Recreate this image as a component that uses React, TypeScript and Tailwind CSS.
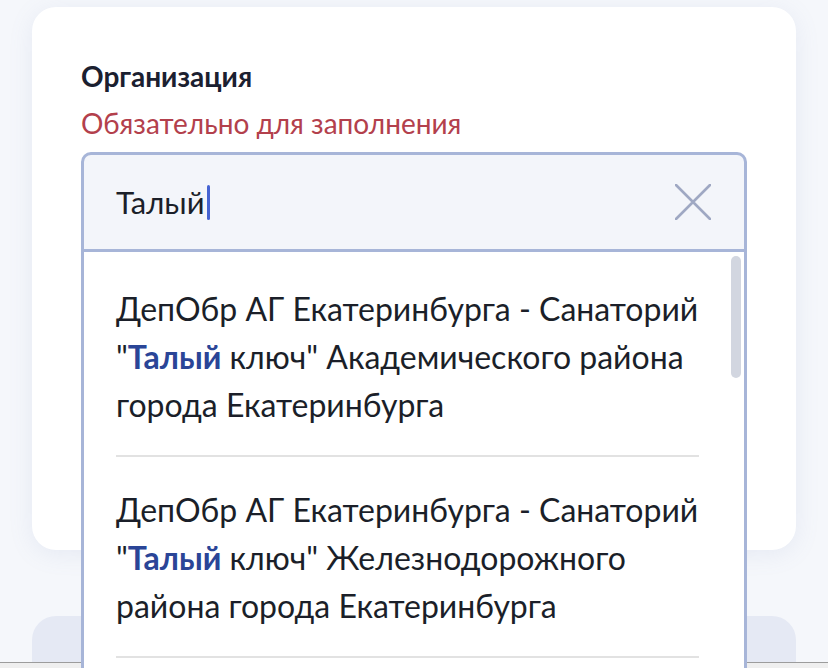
import { useState } from 'react';

const options = [
    {
        before: 'ДепОбр АГ Екатеринбурга - Санаторий "',
        match: 'Талый',
        after: ' ключ" Академического района города Екатеринбурга',
    },
    {
        before: 'ДепОбр АГ Екатеринбурга - Санаторий "',
        match: 'Талый',
        after: ' ключ" Железнодорожного района города Екатеринбурга',
    },
];

function App() {
    const [query, setQuery] = useState('Талый');

    return (
        <div
            className="relative h-[668px] overflow-hidden bg-[#f5f7fb] text-[#1b1f29]"
            style={{ fontFamily: 'Lato, "Noto Sans", sans-serif' }}
        >
            <div className="mx-[32px] mt-[7px] h-[543px] rounded-[24px] bg-white px-[49px] pt-[53px] shadow-[0_4px_24px_rgba(120,140,190,0.12)]">
                <div className="text-[28px] font-bold leading-[32px] text-[#1b2030]">Организация</div>
                <div className="mt-[15px] text-[28px] leading-[32px] text-[#b3404c]">Обязательно для заполнения</div>

                <div className="relative z-10 mt-[13px]">
                    <div className="flex h-[100px] items-center rounded-t-[10px] border-[3px] border-[#a7b5d8] bg-[#f3f5fa] pl-[32px] pr-[33px]">
                        <div className="flex flex-1 items-center">
                            <span className="text-[31px] leading-none">{query}</span>
                            <span className="ml-[2px] h-[35px] w-[3px] rounded-full bg-[#4563d2]" />
                        </div>
                        <button onClick={() => setQuery('')} className="flex h-[36px] w-[36px] items-center justify-center">
                            <svg width="36" height="36" viewBox="0 0 36 36" fill="none" stroke="#9fa8c3" strokeWidth="2.6" strokeLinecap="round">
                                <path d="M1 1L35 35M35 1L1 35" />
                            </svg>
                        </button>
                    </div>

                    <div className="absolute left-0 right-0 top-full h-[420px] border-x-[3px] border-[#a7b5d8] bg-white">
                        <div className="absolute right-[3px] top-[4px] h-[122px] w-[10px] rounded-full bg-[#d2d6e0]" />
                        <div className="pl-[32px] pr-[45px] pt-[4px]">
                            {options.map((o, i) => (
                                <div key={i} className="border-b-2 border-[#e2e2e2] pb-[26px] pt-[29px] text-[32px] leading-[48px]">
                                    {o.before}
                                    <span className="font-bold text-[#2a4597]">{o.match}</span>
                                    {o.after}
                                </div>
                            ))}
                        </div>
                    </div>
                </div>
            </div>

            <div className="mx-[32px] mt-[66px] h-[200px] rounded-t-[24px] bg-[#e5e9f4]" />

            <div className="absolute bottom-0 left-0 right-0 h-[6px] border-t border-[#9c9c9c] bg-[#efefef]" />
        </div>
    );
}

export default App;
